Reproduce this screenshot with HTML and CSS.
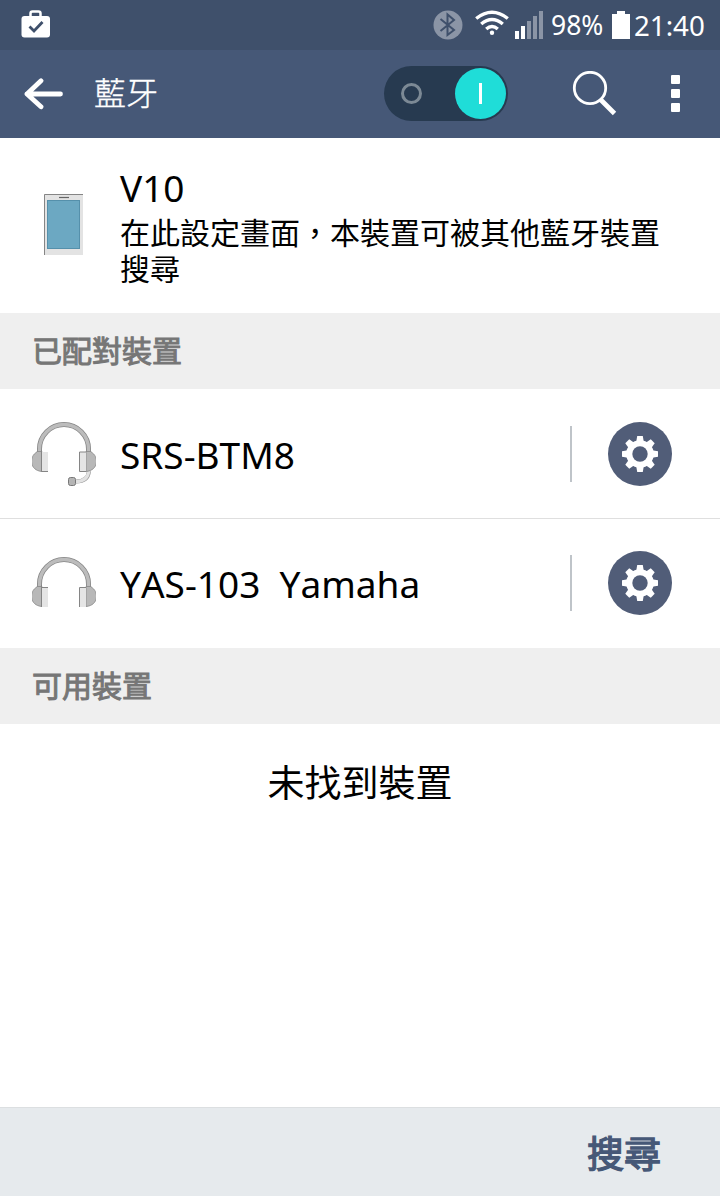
FILE: index.html
```html
<!DOCTYPE html>
<html lang="zh-Hant">
<head>
    <meta charset="UTF-8">
    <meta name="viewport" content="width=device-width, initial-scale=1.0">
    <title>藍牙</title>
    <link rel="stylesheet" href="styles.css">
</head>
<body>
    <div class="screen">
        <div class="status-bar">
            <svg class="status-store" width="30" height="28" viewBox="0 0 30 28">
                <path d="M9.500 6V3.500Q9.500 1.500 11.500 1.500H17.500Q19.500 1.500 19.500 3.500V6" fill="none" stroke="#fff" stroke-width="2.500"/>
                <rect x="0.500" y="6" width="28.500" height="21.500" rx="3" fill="#fff"/>
                <path d="M8.500 16.500L13 21L21.500 12" fill="none" stroke="#3f506b" stroke-width="2.800"/>
            </svg>
            <svg class="status-bluetooth" width="30" height="30" viewBox="0 0 30 30">
                <circle cx="15" cy="15" r="14.500" fill="#8b95a6"/>
                <path d="M7.500 9L21 20L14.500 25V4.500L21 10L7.500 21" fill="none" stroke="#3f506b" stroke-width="2"/>
            </svg>
            <svg class="status-wifi" width="34" height="26" viewBox="0 0 34 26">
                <g fill="none" stroke="#fff" stroke-width="3.400">
                    <path d="M1.200 8.500Q17 -4 32.800 8.500"/>
                    <path d="M6.200 14Q17 5 27.800 14"/>
                    <path d="M11.200 19Q17 14 22.800 19"/>
                </g>
                <circle cx="17" cy="22.700" r="2.200" fill="#fff"/>
            </svg>
            <svg class="status-signal" width="28" height="28" viewBox="0 0 28 28">
                <path d="M0 20H4V28H0zM6 15H10V28H6z" fill="#fff"/>
                <path d="M12 10H16V28H12zM18 5H22V28H18zM24 0H28V28H24z" fill="#8b95a6"/>
            </svg>
            <span class="status-percent">98%</span>
            <svg class="status-battery" width="18" height="28" viewBox="0 0 18 28">
                <path d="M5 0H13V3H18V28H0V3H5z" fill="#fff"/>
            </svg>
            <span class="status-time">21:40</span>
        </div>

        <div class="app-bar">
            <svg class="back" width="40" height="32" viewBox="0 0 40 32">
                <path d="M17 2.800L3 16L17 28.800M3 16H36.500" fill="none" stroke="#fff" stroke-width="4.800" stroke-linecap="round" stroke-linejoin="round"/>
            </svg>
            <h1>藍牙</h1>
            <div class="toggle">
                <span class="toggle-off"></span>
                <span class="toggle-knob"></span>
            </div>
            <svg class="search-icon" width="46" height="46" viewBox="0 0 46 46">
                <circle cx="18" cy="17" r="15.700" fill="none" stroke="#fff" stroke-width="2.800"/>
                <path d="M28.500 28.500L42.500 42.500" stroke="#fff" stroke-width="4.800"/>
            </svg>
            <div class="more"><i></i><i></i><i></i></div>
        </div>

        <div class="own-device">
            <svg class="phone" width="40" height="61" viewBox="0 0 40 61">
                <rect width="39" height="61" fill="#e3e3e3"/>
                <path d="M0.500 61V0.500H39" fill="none" stroke="#858585"/>
                <path d="M15 3.500H25" stroke="#666" stroke-width="1.200"/>
                <rect x="3.500" y="6.500" width="32" height="48" fill="#6ca8c2" stroke="#5590ab"/>
            </svg>
            <div class="own-text">
                <div class="name">V10</div>
                <p>在此設定畫面，本裝置可被其他藍牙裝置搜尋</p>
            </div>
        </div>

        <h2>已配對裝置</h2>
        <div class="device">
            <svg class="headset" width="64" height="64" viewBox="0 0 64 64">
                <path d="M57 49Q56 59.500 44 59.500" fill="none" stroke="#999" stroke-width="4"/>
                <path d="M57 48Q56 59.500 44 59.500" fill="none" stroke="#e2e2e2" stroke-width="3"/>
                <rect x="36.500" y="55.500" width="7" height="8" rx="2" fill="#b5b5b5" stroke="#777"/>
                <path d="M7.500 33V27A24.500 24.500 0 0 1 56.500 27V33" fill="none" stroke="#858585" stroke-width="5"/>
                <path d="M7.500 33V27A24.500 24.500 0 0 1 56.500 27V33" fill="none" stroke="#bcbcbc" stroke-width="3.400"/>
                <path d="M5 29.500H10V49.500C-3 48.500 -3 34 5 30zM59 29.500H54V49.500C67 48.500 67 34 59 30z" fill="#b8b8b8" stroke="#888" stroke-width="0.800"/>
                <path d="M10 30H16V50H10zM48 30H54V50H48z" fill="#e5e5e5"/>
                <path d="M9.500 28V49.500H16M54 30H47.500V49.500H54" fill="none" stroke="#858585"/>
            </svg>
            <span class="name">SRS-BTM8</span>
            <span class="divider"></span>
            <svg class="gear" width="64" height="64" viewBox="0 0 64 64">
                <circle cx="32" cy="32" r="32" fill="#515d78"/>
                <g id="cog" fill="#fff">
                    <circle cx="32" cy="32" r="13.800"/>
                    <path id="teeth" d="M29.200 14H34.800L35.800 20V44L34.800 50H29.200L28.200 44V20z"/>
                    <use href="#teeth" transform="rotate(45 32 32)"/>
                    <use href="#teeth" transform="rotate(90 32 32)"/>
                    <use href="#teeth" transform="rotate(135 32 32)"/>
                </g>
                <circle cx="32" cy="32" r="7.700" fill="#515d78"/>
            </svg>
        </div>
        <div class="device device-last">
            <svg class="headset" width="64" height="52" viewBox="0 0 64 52">
                <path d="M7.500 33V27A24.500 24.500 0 0 1 56.500 27V33" fill="none" stroke="#858585" stroke-width="5"/>
                <path d="M7.500 33V27A24.500 24.500 0 0 1 56.500 27V33" fill="none" stroke="#bcbcbc" stroke-width="3.400"/>
                <path d="M5 29.500H10V49.500C-3 48.500 -3 34 5 30zM59 29.500H54V49.500C67 48.500 67 34 59 30z" fill="#b8b8b8" stroke="#888" stroke-width="0.800"/>
                <path d="M10 30H16V50H10zM48 30H54V50H48z" fill="#e5e5e5"/>
                <path d="M9.500 28V50M16 30.500H10M54 30.500H47.500V50" fill="none" stroke="#858585"/>
            </svg>
            <span class="name">YAS-103&nbsp; Yamaha</span>
            <span class="divider"></span>
            <svg class="gear" width="64" height="64" viewBox="0 0 64 64">
                <circle cx="32" cy="32" r="32" fill="#515d78"/>
                <use href="#cog"/>
                <circle cx="32" cy="32" r="7.700" fill="#515d78"/>
            </svg>
        </div>

        <h2>可用裝置</h2>
        <div class="empty">未找到裝置</div>

        <div class="footer">
            <button class="scan">搜尋</button>
        </div>
    </div>
</body>
</html>
```
FILE: styles.css
```css
* {
    box-sizing: border-box;
}
body {
    margin: 0;
    background-color: #fff;
    color: #000;
    font-family: "Noto Sans", "Noto Sans CJK TC", sans-serif;
    font-kerning: none;
}
svg {
    display: block;
    flex-shrink: 0;
}
h1, h2, p {
    margin: 0;
}
.screen {
    display: flex;
    flex-direction: column;
    width: 720px;
    height: 1196px;
    overflow: hidden;
}

/* status bar */
.status-bar {
    display: flex;
    align-items: center;
    height: 50px;
    padding-left: 21px;
    background-color: #3f506b;
    color: #fff;
    font-size: 26.5px;
    line-height: 50px;
    flex-shrink: 0;
}
.status-store {
    margin-right: auto;
    margin-bottom: 2px;
}
.status-bluetooth {
    margin-right: 12px;
}
.status-wifi {
    margin-right: 6px;
    margin-bottom: 4px;
}
.status-signal {
    margin-right: 8px;
}
.status-percent {
    width: 61px;
    white-space: nowrap;
}
.status-battery {
    margin-right: 4px;
}
.status-time {
    width: 86px;
    font-size: 27.7px;
    white-space: nowrap;
}

/* app bar */
.app-bar {
    display: flex;
    align-items: center;
    height: 88px;
    padding: 0 40px 0 24px;
    background-color: #465877;
    color: #fff;
    flex-shrink: 0;
}
.app-bar h1 {
    margin-left: 30px;
    margin-bottom: 2px;
    font-size: 32px;
    font-weight: 300;
    line-height: 50px;
    -webkit-text-stroke: 0.4px #fff;
}
.toggle {
    display: flex;
    align-items: center;
    justify-content: space-between;
    width: 124px;
    height: 55px;
    margin-left: auto;
    margin-bottom: 1px;
    padding: 0 2px 0 17px;
    border-radius: 28px;
    background-color: #273a50;
}
.toggle-off {
    width: 21px;
    height: 21px;
    border: 3px solid #7c8995;
    border-radius: 50%;
}
.toggle-knob {
    display: flex;
    align-items: center;
    justify-content: center;
    width: 51px;
    height: 51px;
    border-radius: 50%;
    background-color: #1fddd8;
}
.toggle-knob::before {
    content: "";
    width: 3px;
    height: 21px;
    background-color: #fff;
}
.search-icon {
    margin-left: 64px;
}
.more {
    display: flex;
    flex-direction: column;
    gap: 5px;
    margin-left: 53px;
    margin-bottom: 1px;
}
.more i {
    width: 9px;
    height: 9px;
    border-radius: 1px;
    background-color: #fff;
}

/* this device */
.own-device {
    display: flex;
    height: 175px;
    padding: 30px 32px 0 44px;
    flex-shrink: 0;
}
.phone {
    margin-top: 26px;
}
.own-text {
    margin-left: 36px;
}
.name {
    font-size: 37px;
    line-height: 40px;
    white-space: nowrap;
}
.own-text p {
    font-family: "Noto Sans CJK TC", sans-serif;
    width: 556px;
    margin-top: 5px;
    font-size: 30px;
    line-height: 36px;
}

/* lists */
h2 {
    height: 76px;
    padding-left: 32px;
    background-color: #efefef;
    color: #767676;
    font-size: 30px;
    font-weight: 400;
    line-height: 76px;
    -webkit-text-stroke: 1px #767676;
    flex-shrink: 0;
}
.device {
    display: flex;
    align-items: center;
    height: 130px;
    padding: 1px 48px 0 32px;
    border-bottom: 1px solid #dfdfdf;
    flex-shrink: 0;
}
.device-last {
    height: 129px;
    padding-top: 0;
    padding-bottom: 1px;
    border-bottom: 0;
}
.device .name {
    margin-left: 24px;
    margin-top: 1px;
}
.divider {
    width: 2px;
    height: 56px;
    margin-left: auto;
    margin-right: 36px;
    background-color: #bfc4c9;
}
.empty {
    padding-top: 32px;
    font-size: 37px;
    line-height: 54px;
    text-align: center;
}

/* footer */
.footer {
    display: flex;
    justify-content: flex-end;
    height: 89px;
    margin-top: auto;
    padding-right: 59px;
    border-top: 1px solid #dcdfe1;
    background-color: #e6eaed;
}
.scan {
    padding: 0;
    border: 0;
    background: none;
    color: #465877;
    font-family: "Noto Sans CJK TC", sans-serif;
    font-size: 37px;
    font-weight: 400;
    -webkit-text-stroke: 1.3px #465877;
}
```
